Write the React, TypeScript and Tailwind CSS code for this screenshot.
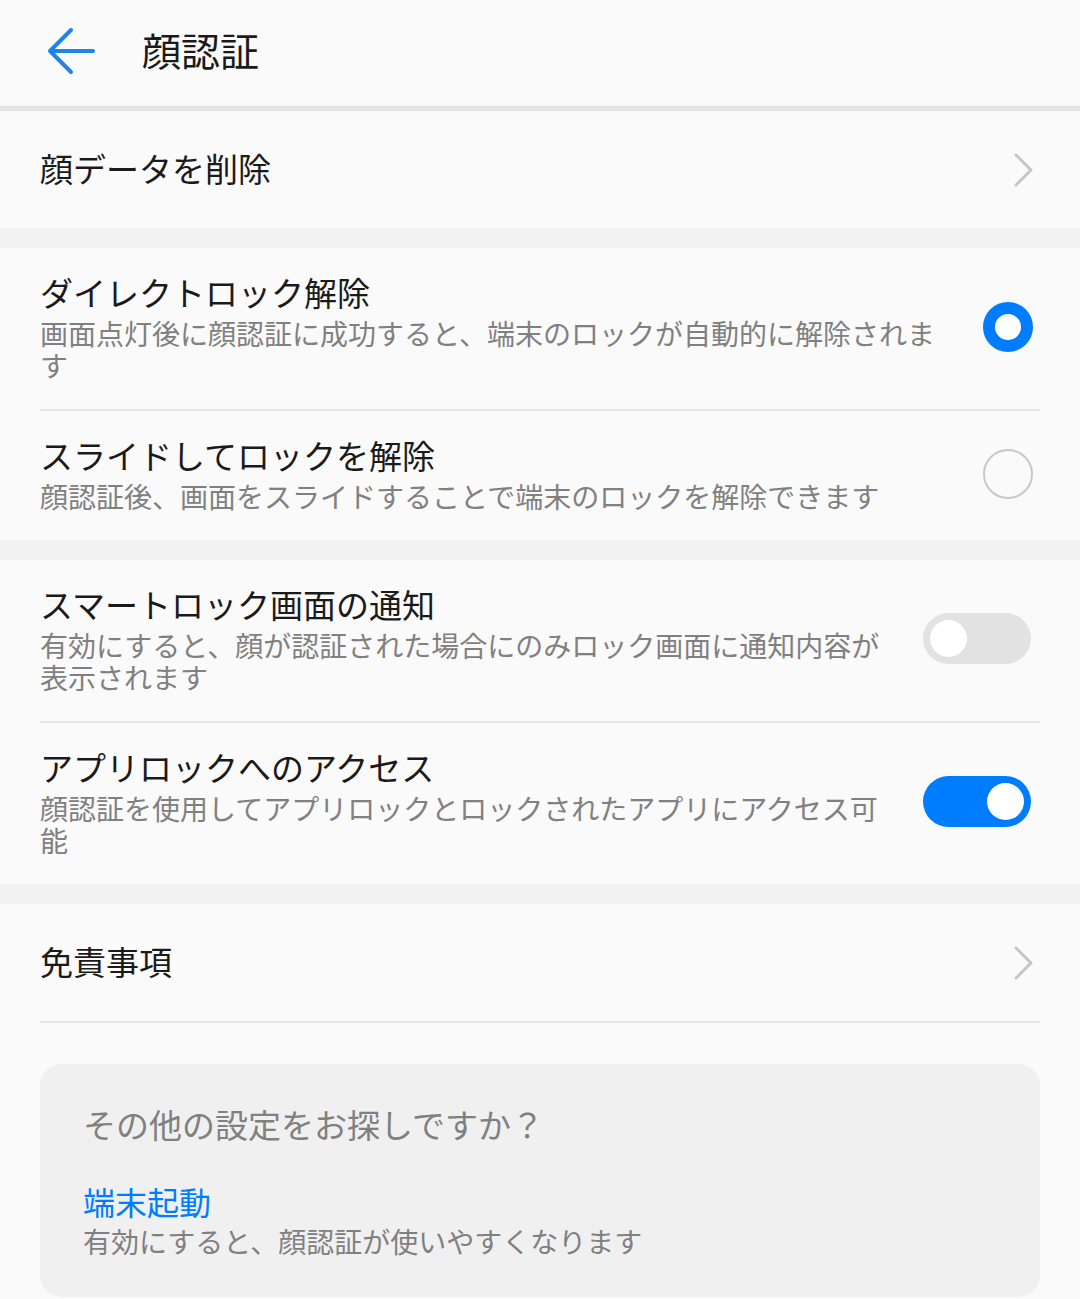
import React from "react";

function Chevron() {
    return (
        <svg width="22" height="36" viewBox="0 0 22 36" className="shrink-0">
            <path
                d="M4 3 L19 18 L4 33"
                fill="none"
                stroke="#c6c6c6"
                strokeWidth="3"
                strokeLinecap="round"
                strokeLinejoin="round"
            />
        </svg>
    );
}

function Radio({ checked }: { checked: boolean }) {
    return checked ? (
        <div className="w-[50px] h-[50px] shrink-0 rounded-full border-[12px] border-[#007dff] bg-white" />
    ) : (
        <div className="w-[50px] h-[50px] shrink-0 rounded-full border-2 border-[#c8c8c8]" />
    );
}

function Toggle({ on }: { on: boolean }) {
    return (
        <div
            className={`w-[108px] h-[51px] shrink-0 rounded-full p-[7px] flex items-center ${
                on ? "bg-[#007dff] justify-end" : "bg-[#e2e2e2] justify-start"
            }`}
        >
            <div className="w-[37px] h-[37px] rounded-full bg-white" />
        </div>
    );
}

function Divider() {
    return <div className="mx-10 h-[2px] bg-[#e8e8e8]" />;
}

function Gap() {
    return <div className="h-5 bg-[#f2f2f2]" />;
}

interface OptionRowProps {
    title: string;
    sub: string;
    control: React.ReactNode;
    wide?: boolean;
}

function OptionRow({ title, sub, control, wide }: OptionRowProps) {
    return (
        <div
            className={`flex items-center pl-10 pt-[24px] pb-[28px] ${
                wide ? "pr-[47px]" : "pr-[49px]"
            }`}
        >
            <div className="flex-1 min-w-0">
                <div className="text-[33px] leading-[40px] text-[#1a1a1a]">
                    {title}
                </div>
                <div className="mt-[5px] text-[28px] leading-[32px] text-[#808080]">
                    {sub}
                </div>
            </div>
            <div className={wide ? "ml-[33px]" : "ml-[35px]"}>{control}</div>
        </div>
    );
}

export default function App() {
    return (
        <div className="w-full min-h-screen bg-[#fafafa] font-['Noto_Sans_CJK_JP',sans-serif]">
            {/* header */}
            <div className="h-[106px] flex items-center border-b-[5px] border-[#e4e4e4] box-content">
                <svg width="52" height="52" viewBox="0 0 52 52" className="ml-[44px]">
                    <path
                        d="M6 24 L49 24 M6 24 L27 3 M6 24 L27 45"
                        fill="none"
                        stroke="#1f84ea"
                        strokeWidth="4"
                        strokeLinecap="round"
                        strokeLinejoin="round"
                    />
                </svg>
                <h1 className="ml-[46px] mb-[8px] text-[39px] leading-[48px] text-[#1a1a1a] font-normal">
                    顔認証
                </h1>
            </div>

            <div className="h-[117px] flex items-center justify-between pl-10 pr-[46px]">
                <span className="mb-[3px] text-[33px] leading-[40px] text-[#1a1a1a]">
                    顔データを削除
                </span>
                <Chevron />
            </div>

            <Gap />

            <OptionRow
                wide
                title="ダイレクトロック解除"
                sub="画面点灯後に顔認証に成功すると、端末のロックが自動的に解除されます"
                control={<Radio checked />}
            />
            <Divider />
            <OptionRow
                wide
                title="スライドしてロックを解除"
                sub="顔認証後、画面をスライドすることで端末のロックを解除できます"
                control={<Radio checked={false} />}
            />

            <Gap />

            <OptionRow
                title="スマートロック画面の通知"
                sub="有効にすると、顔が認証された場合にのみロック画面に通知内容が表示されます"
                control={<Toggle on={false} />}
            />
            <Divider />
            <OptionRow
                title="アプリロックへのアクセス"
                sub="顔認証を使用してアプリロックとロックされたアプリにアクセス可能"
                control={<Toggle on />}
            />

            <Gap />

            <div className="h-[117px] flex items-center justify-between pl-10 pr-[46px]">
                <span className="mb-[3px] text-[33px] leading-[40px] text-[#1a1a1a]">
                    免責事項
                </span>
                <Chevron />
            </div>
            <Divider />

            <div className="mx-10 mt-[41px] rounded-[22px] bg-[#f0f0f0] pl-[43px] pr-10 pt-[40px] pb-[38px]">
                <div className="text-[33px] leading-[40px] text-[#808080]">
                    その他の設定をお探しですか？
                </div>
                <div className="mt-[37px] text-[32px] leading-[40px] text-[#007dff]">
                    端末起動
                </div>
                <div className="mt-[2px] text-[28px] leading-[36px] text-[#808080]">
                    有効にすると、顔認証が使いやすくなります
                </div>
            </div>
        </div>
    );
}
